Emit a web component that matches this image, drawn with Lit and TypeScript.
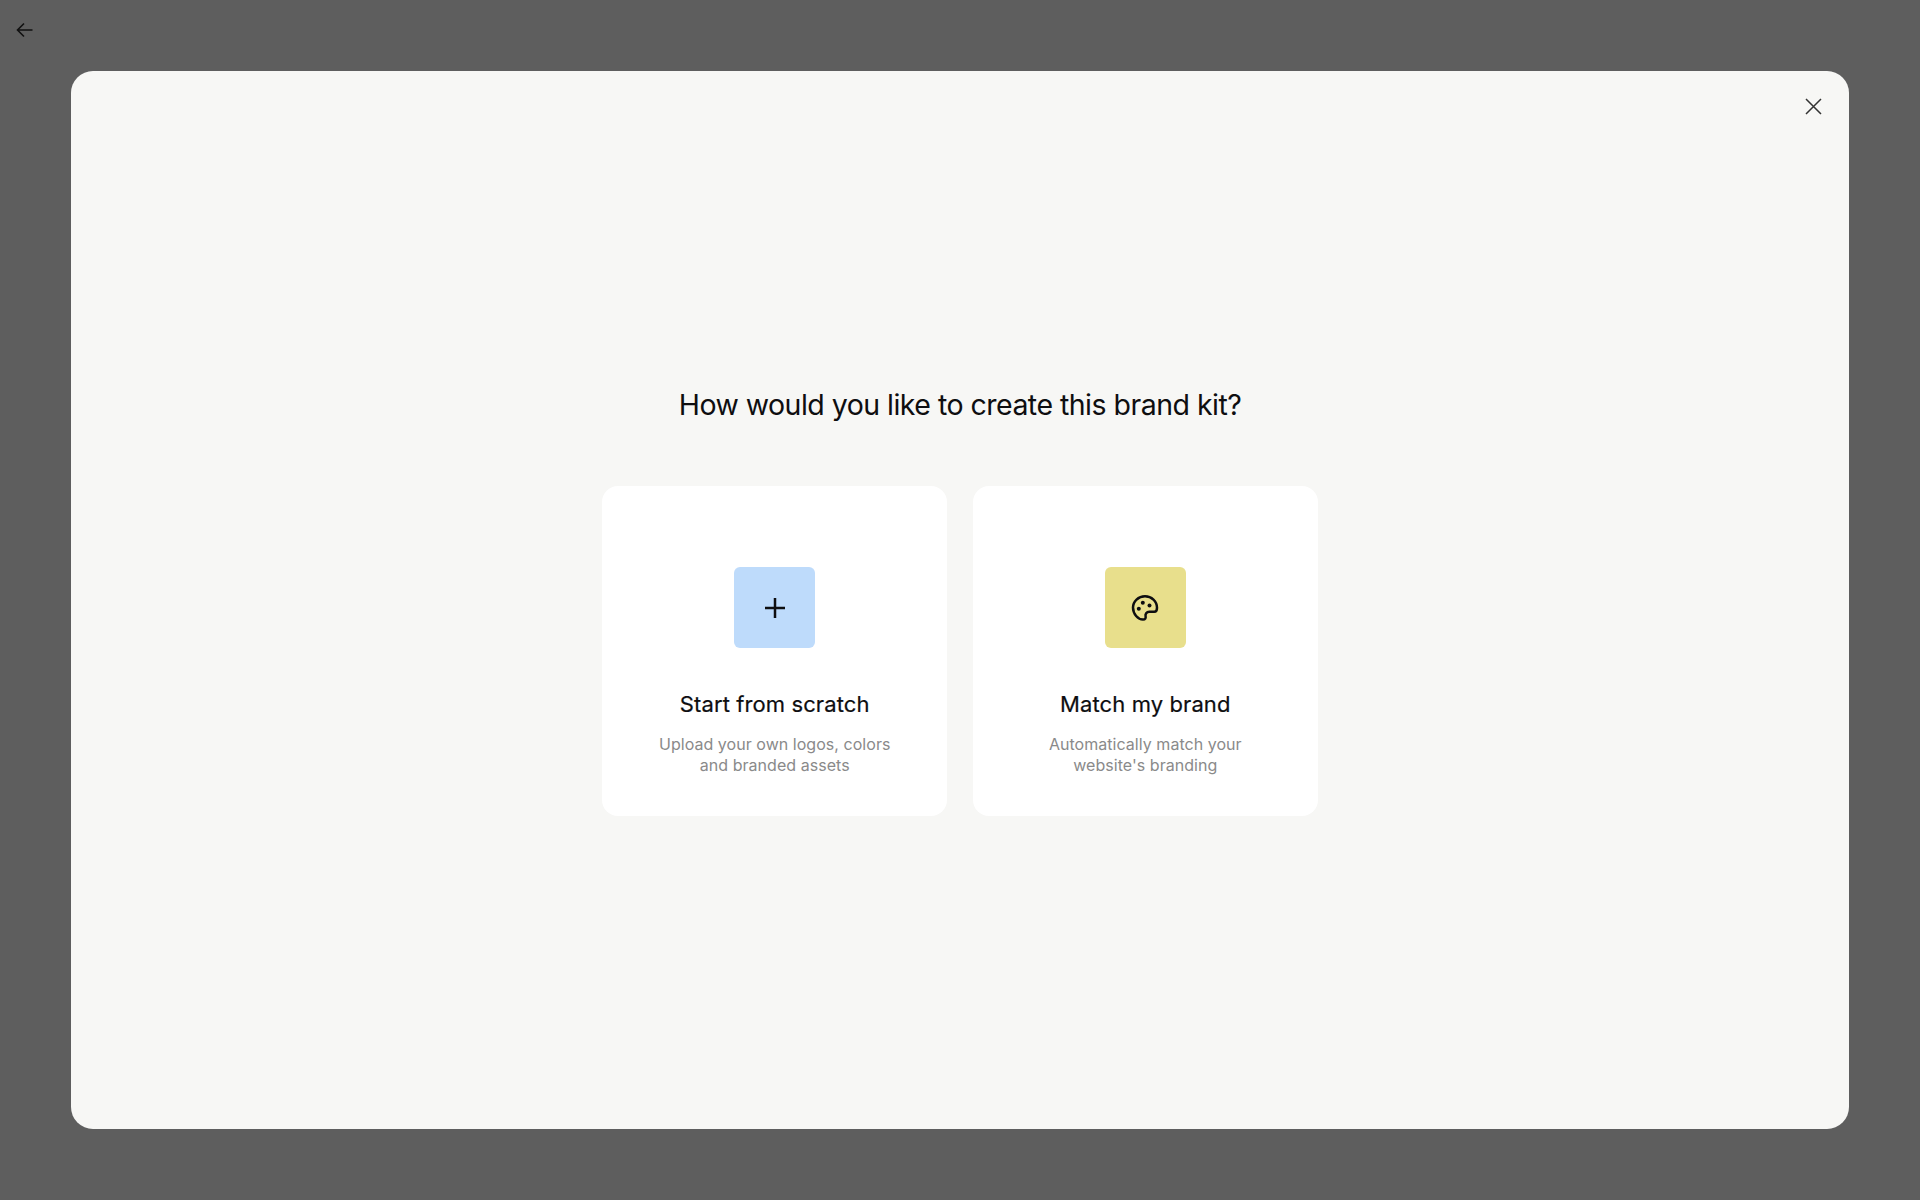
import { LitElement, html, css } from "lit";
import { customElement } from "lit/decorators.js";

@customElement("app-root")
export class AppRoot extends LitElement {
  static styles = css`
    :host {
      display: block;
      font-family: Inter, "Liberation Sans", sans-serif;
      color: #0e0e10;
    }
    .backdrop {
      box-sizing: border-box;
      height: 1200px;
      background: #5e5e5e;
      display: flex;
      flex-direction: column;
      padding: 0 71px 71px;
    }
    .top {
      height: 71px;
      flex: none;
      display: flex;
      align-items: flex-start;
      margin-left: -71px;
    }
    .back {
      width: 20px;
      height: 20px;
      margin: 20px 0 0 15px;
      display: block;
    }
    .modal {
      position: relative;
      flex: 1;
      background: #f7f7f5;
      border-radius: 22px;
      display: flex;
      flex-direction: column;
      align-items: center;
      justify-content: center;
    }
    .close {
      position: absolute;
      top: 25px;
      right: 26px;
      width: 20px;
      height: 20px;
      display: block;
    }
    h1 {
      margin: 0 0 60px;
      font-size: 28.5px;
      line-height: 42px;
      font-weight: 400;
      letter-spacing: -0.52px;
    }
    .cards {
      display: flex;
      gap: 25.6px;
    }
    .card {
      box-sizing: border-box;
      width: 345px;
      height: 330px;
      background: #fff;
      border-radius: 16px;
      padding-top: 81px;
      display: flex;
      flex-direction: column;
      align-items: center;
      text-align: center;
    }
    .tile {
      width: 81px;
      height: 81px;
      border-radius: 6px;
      display: flex;
      align-items: center;
      justify-content: center;
    }
    .blue { background: #bedbfb; }
    .yellow { background: #e8df8c; }
    .tile svg { width: 30px; height: 30px; display: block; }
    h2 {
      margin: 41px 0 0;
      font-size: 22px;
      line-height: 30px;
      font-weight: 400;
      letter-spacing: 0.1px;
      -webkit-text-stroke: 0.2px currentColor;
    }
    p {
      margin: 15px 0 0;
      font-size: 16px;
      line-height: 20.5px;
      letter-spacing: 0.04px;
      color: #8a8a8a;
    }
  `;

  render() {
    return html`
      <div class="backdrop">
        <div class="top">
          <svg class="back" viewBox="0 0 20 20" fill="none" stroke="#111" stroke-width="1.6">
            <path d="M17.5 10H2.5M9 3.5L2.5 10L9 16.5" />
          </svg>
        </div>
        <div class="modal">
          <svg class="close" viewBox="0 0 20 20" fill="none" stroke="#333" stroke-width="1.5">
            <path d="M3 3L18 18M18 3L3 18" />
          </svg>
          <h1>How would you like to create this brand kit?</h1>
          <div class="cards">
            <div class="card">
              <div class="tile blue">
                <svg viewBox="0 0 30 30" fill="none" stroke="#0e0e10" stroke-width="2.5">
                  <path d="M15 5V25M5 15H25" />
                </svg>
              </div>
              <h2>Start from scratch</h2>
              <p>Upload your own logos, colors<br />and branded assets</p>
            </div>
            <div class="card">
              <div class="tile yellow">
                <svg viewBox="0 0 30 30" fill="none">
                  <path
                    d="M15 3.2C8.4 3.2 3 8.3 3 14.6C3 21 8 26.6 13 26.6C15.4 26.6 15.9 25 15.6 23.6C15.1 21.2 16.4 18.8 19.4 18.8H24.3C26.2 18.8 27 17.2 27 14.8C27 8.3 21.6 3.2 15 3.2Z"
                    stroke="#0e0e10"
                    stroke-width="2.5"
                    stroke-linejoin="round"
                  />
                  <circle cx="12.8" cy="9.8" r="2" fill="#0e0e10" />
                  <circle cx="19.5" cy="12.5" r="2" fill="#0e0e10" />
                  <circle cx="8.8" cy="15.8" r="2" fill="#0e0e10" />
                </svg>
              </div>
              <h2>Match my brand</h2>
              <p>Automatically match your<br />website's branding</p>
            </div>
          </div>
        </div>
      </div>
    `;
  }
}
